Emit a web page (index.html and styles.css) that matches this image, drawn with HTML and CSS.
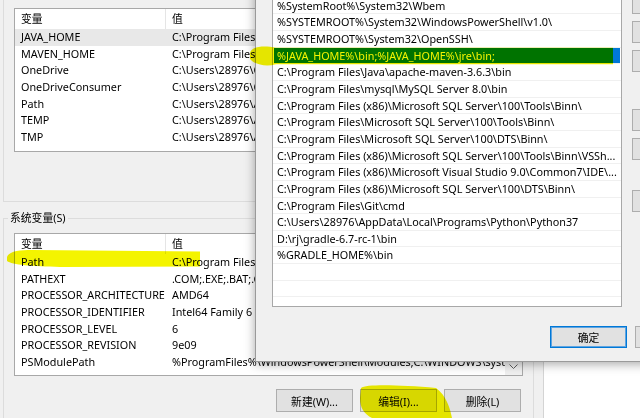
FILE: index.html
```html
<!DOCTYPE html>
<html lang="zh-CN">
<head>
  <meta charset="UTF-8" />
  <title>环境变量</title>
  <link rel="stylesheet" href="styles.css">
</head>
<body>
  <!-- back window: environment variables -->
  <div class="win-back">
    <div class="user-group">
      <div class="lv user-list">
        <div class="lv-head"><span class="c1">变量</span><span class="c2">值</span></div>
        <div class="lv-row sel-gray"><span class="c1">JAVA_HOME</span><span class="c2">C:\Program Files\Java\jdk1.8.0_201</span></div>
        <div class="lv-row"><span class="c1">MAVEN_HOME</span><span class="c2">C:\Program Files\Java\apache-maven-3.6.3</span></div>
        <div class="lv-row"><span class="c1">OneDrive</span><span class="c2">C:\Users\28976\OneDrive</span></div>
        <div class="lv-row"><span class="c1">OneDriveConsumer</span><span class="c2">C:\Users\28976\OneDrive</span></div>
        <div class="lv-row"><span class="c1">Path</span><span class="c2">C:\Users\28976\AppData\Local\Microsoft\WindowsApps;</span></div>
        <div class="lv-row"><span class="c1">TEMP</span><span class="c2">C:\Users\28976\AppData\Local\Temp</span></div>
        <div class="lv-row"><span class="c1">TMP</span><span class="c2">C:\Users\28976\AppData\Local\Temp</span></div>
      </div>
    </div>

    <fieldset class="sys-group">
      <legend>系统变量(S)</legend>
      <div class="lv sys-list">
        <div class="lv-main">
          <div class="lv-head"><span class="c1">变量</span><span class="c2">值</span></div>
          <div class="lv-row"><span class="c1">Path</span><span class="c2">C:\Program Files (x86)\Common Files\Oracle\Java\javapath;</span></div>
          <div class="lv-row"><span class="c1">PATHEXT</span><span class="c2">.COM;.EXE;.BAT;.CMD;.VBS;.VBE;.JS;.JSE;.WSF;.WSH;.MSC</span></div>
          <div class="lv-row"><span class="c1">PROCESSOR_ARCHITECTURE</span><span class="c2">AMD64</span></div>
          <div class="lv-row"><span class="c1">PROCESSOR_IDENTIFIER</span><span class="c2">Intel64 Family 6 Model 158 Stepping 9, GenuineIntel</span></div>
          <div class="lv-row"><span class="c1">PROCESSOR_LEVEL</span><span class="c2">6</span></div>
          <div class="lv-row"><span class="c1">PROCESSOR_REVISION</span><span class="c2">9e09</span></div>
          <div class="lv-row"><span class="c1">PSModulePath</span><span class="c2">%ProgramFiles%\WindowsPowerShell\Modules;C:\WINDOWS\system32\WindowsPowerShell\v1.0\Modules</span></div>
          <div class="lv-row"><span class="c1">TEMP</span><span class="c2">C:\WINDOWS\TEMP</span></div>
        </div>
        <div class="vscroll">
          <svg width="9" height="6" viewBox="0 0 9 6"><polyline points="0.5,0.5 4.5,4.5 8.5,0.5" fill="none" stroke="#606060" stroke-width="1"/></svg>
        </div>
      </div>
      <div class="btn-row">
        <button class="btn">新建(W)...</button>
        <button class="btn">编辑(I)...</button>
        <button class="btn">删除(L)</button>
      </div>
    </fieldset>
  </div>

  <!-- front window: edit Path -->
  <div class="win-front">
    <div class="front-body">
      <div class="plist">
        <div class="p-row">%SystemRoot%\system32</div>
        <div class="p-row">%SystemRoot%</div>
        <div class="p-row">%SystemRoot%\System32\Wbem</div>
        <div class="p-row">%SYSTEMROOT%\System32\WindowsPowerShell\v1.0\</div>
        <div class="p-row">%SYSTEMROOT%\System32\OpenSSH\</div>
        <div class="p-row selected">%JAVA_HOME%\bin;%JAVA_HOME%\jre\bin;</div>
        <div class="p-row">C:\Program Files\Java\apache-maven-3.6.3\bin</div>
        <div class="p-row">C:\Program Files\mysql\MySQL Server 8.0\bin</div>
        <div class="p-row">C:\Program Files (x86)\Microsoft SQL Server\100\Tools\Binn\</div>
        <div class="p-row">C:\Program Files\Microsoft SQL Server\100\Tools\Binn\</div>
        <div class="p-row">C:\Program Files\Microsoft SQL Server\100\DTS\Binn\</div>
        <div class="p-row">C:\Program Files (x86)\Microsoft SQL Server\100\Tools\Binn\VSSh...</div>
        <div class="p-row">C:\Program Files (x86)\Microsoft Visual Studio 9.0\Common7\IDE\...</div>
        <div class="p-row">C:\Program Files (x86)\Microsoft SQL Server\100\DTS\Binn\</div>
        <div class="p-row">C:\Program Files\Git\cmd</div>
        <div class="p-row">C:\Users\28976\AppData\Local\Programs\Python\Python37</div>
        <div class="p-row">D:\rj\gradle-6.7-rc-1\bin</div>
        <div class="p-row">%GRADLE_HOME%\bin</div>
        <div class="p-row"></div>
        <div class="p-row"></div>
        <div class="p-row"></div>
      </div>
      <div class="side-btns">
        <button class="btn side">新建(N)</button>
        <button class="btn side">编辑(E)</button>
        <button class="btn side">浏览(B)...</button>
        <button class="btn side">删除(D)</button>
        <button class="btn side group-a">上移(U)</button>
        <button class="btn side">下移(O)</button>
        <button class="btn side group-b">编辑文本(T)...</button>
      </div>
    </div>
    <div class="front-foot">
      <button class="btn default">确定</button>
      <button class="btn">取消</button>
    </div>
  </div>

  <!-- highlighter marks drawn over the screenshot -->
  <svg class="marker" width="640" height="418" viewBox="0 0 640 418">
    <path d="M250,53 C251,47 262,45 276,47.7 L613,47.7 L613,64.3 L276,64.3 C266,67 255,65 250,59 Z"/>
    <path d="M7,257 C9,251 20,250 32,250 L200,251.5 L200,266.5 L60,267 C32,266 12,265 7,261 Z"/>
    <path d="M361,388 C366,384 400,385 436,388 C446,395 450,408 452,418 L372,418 C364,414 360,408 360,398 Z"/>
  </svg>
</body>
</html>
```

FILE: styles.css
```css
* {
  box-sizing: border-box;
}

html, body {
  margin: 0;
  padding: 0;
}

body {
  width: 640px;
  height: 418px;
  overflow: hidden;
  position: relative;
  background: #fff;
  font-family: "Noto Sans", "Noto Sans CJK SC", sans-serif;
  font-size: 10.8px;
  color: #000;
}

/* back window */
.win-back {
  width: 544px;
  height: 418px;
  background: #f0f0f0;
  border-right: 1px solid #d4d4d4;
  padding-left: 3px;
}

.user-group {
  width: 531px;
  height: 202px;
  border: 1px solid #dcdcdc;
  border-top: none;
  padding: 8px 10px 0;
}

.lv {
  background: #fff;
  border: 1px solid #a8a8a8;
  overflow: hidden;
  white-space: nowrap;
}

.user-list {
  height: 144px;
}

.lv-head {
  display: flex;
  height: 20px;
  line-height: 20px;
}

.lv-row {
  display: flex;
  height: 16.67px;
  line-height: 16.67px;
}

.c1 {
  width: 151px;
  flex: none;
  padding-left: 6px;
  overflow: hidden;
}

.lv-head .c1 {
  border-right: 1px solid #e5e5e5;
}

.c2 {
  padding-left: 6px;
}

.sel-gray {
  background: #e8e8e8;
}

.sys-group {
  width: 531px;
  min-width: 0;
  margin: 8px 0 0;
  padding: 7px 10px 0;
  border: 1px solid #dcdcdc;
  border-bottom: none;
  height: 220px;
}

.sys-group legend {
  margin-left: -6px;
  padding: 0 2px;
  line-height: 16px;
  height: 16px;
  color: #000;
}

.sys-list {
  height: 143px;
  display: flex;
}

.lv-main {
  flex: 1;
  min-width: 0;
  overflow: hidden;
}

.vscroll {
  width: 17px;
  flex: none;
  background: #f0f0f0;
  display: flex;
  align-items: flex-end;
  justify-content: center;
  padding-bottom: 5px;
}

.btn-row {
  display: flex;
  justify-content: flex-end;
  gap: 7px;
  margin-top: 13px;
  padding-right: 2px;
}

.btn {
  width: 77px;
  height: 23px;
  padding: 0;
  background: #e1e1e1;
  border: 1px solid #adadad;
  font-family: "Noto Sans", "Noto Sans CJK SC", sans-serif;
  font-size: 10.8px;
  color: #000;
}

/* front window */
.win-front {
  position: absolute;
  left: 255px;
  top: -63.33px;
  width: 474px;
  height: 425.33px;
  background: #f0f0f0;
  border: 1px solid #9a9a9a;
  box-shadow: 0 2px 10px rgba(0, 0, 0, 0.35);
  padding: 25.67px 16px 0;
}

.front-body {
  display: flex;
  gap: 10px;
  height: 343.67px;
}

.plist {
  width: 350px;
  flex: none;
  background: #fff;
  border: 1px solid #a8a8a8;
  overflow: hidden;
  white-space: nowrap;
}

.p-row {
  height: 16.67px;
  line-height: 16px;
  padding-left: 4px;
  border-bottom: 1px solid #f0f0f0;
}

.p-row.selected {
  background: #0078d7;
  color: #fff;
  margin: 0 1px;
  padding-left: 3px;
}

.side-btns {
  display: flex;
  flex-direction: column;
  gap: 7px;
}

.btn.side {
  width: 80px;
  height: 22px;
}

.btn.side.group-a {
  margin-top: 30px;
}

.btn.side.group-b {
  margin-top: 23px;
}

.front-foot {
  display: flex;
  justify-content: flex-end;
  gap: 8px;
  margin-top: 19px;
}

.front-foot .btn {
  height: 22px;
}

.btn.default {
  border: 1px solid #0078d7;
  box-shadow: inset 0 0 0 1px #5fa4e0;
}

/* highlighter */
.marker {
  position: absolute;
  left: 0;
  top: 0;
  mix-blend-mode: multiply;
  pointer-events: none;
  fill: #f4f400;
}
```
